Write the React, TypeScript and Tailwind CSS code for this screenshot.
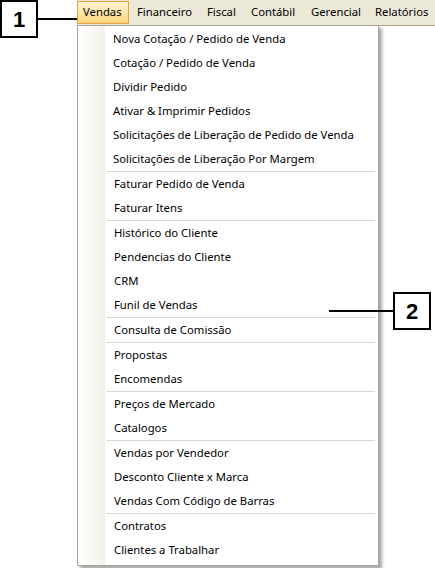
const groups: string[][] = [
  [
    'Nova Cotação / Pedido de Venda',
    'Cotação / Pedido de Venda',
    'Dividir Pedido',
    'Ativar & Imprimir Pedidos',
    'Solicitações de Liberação de Pedido de Venda',
    'Solicitações de Liberação Por Margem',
  ],
  ['Faturar Pedido de Venda', 'Faturar Itens'],
  ['Histórico do Cliente', 'Pendencias do Cliente', 'CRM', 'Funil de Vendas'],
  ['Consulta de Comissão'],
  ['Propostas', 'Encomendas'],
  ['Preços de Mercado', 'Catalogos'],
  ['Vendas por Vendedor', 'Desconto Cliente x Marca', 'Vendas Com Código de Barras'],
  ['Contratos', 'Clientes a Trabalhar'],
];

const topMenu = [
  { label: 'Financeiro', w: 'w-[70px]' },
  { label: 'Fiscal', w: 'w-[44px]' },
  { label: 'Contábil', w: 'w-[60px]' },
  { label: 'Gerencial', w: 'w-[64px]' },
  { label: 'Relatórios', w: 'w-[67px]' },
];

function Callout({ n }: { n: string }) {
  return (
    <div className="w-[38px] h-[38px] border-2 border-black bg-white flex items-center justify-center text-[22px] font-bold text-black font-['Liberation_Sans',sans-serif]">
      {n}
    </div>
  );
}

export default function App() {
  return (
    <div className="w-[435px] h-[568px] bg-white relative overflow-hidden font-['Noto_Sans',sans-serif] text-[11.3px] text-black">
      {/* callout 1 */}
      <div className="absolute left-0 top-0 flex items-center">
        <Callout n="1" />
        <div className="w-[40px] h-[2px] bg-black" />
      </div>

      <div className="ml-[77px] relative">
        {/* menu bar */}
        <div className="h-[26px] bg-[#ece9d8] border-b border-[#b8a58a] flex items-center">
          <div className="w-[52px] h-[23px] pl-[5px] flex items-center border border-[#e5a040] bg-gradient-to-b from-[#fff5d2] to-[#fcd679]">
            Vendas
          </div>
          {topMenu.map((m) => (
            <div key={m.label} className={`${m.w} shrink-0 pl-[8px] whitespace-nowrap`}>
              {m.label}
            </div>
          ))}
        </div>

        {/* dropdown */}
        <div className="absolute left-0 top-[25px] w-[302px] bg-white border border-[#a9a59a] shadow-[3px_3px_3px_rgba(0,0,0,0.35)] flex">
          <div className="w-[27px] shrink-0 bg-gradient-to-r from-white to-[#f3f1e8]" />
          <div className="flex-1 min-w-0 pt-[1px] pb-[3px]">
            {groups.map((g, gi) => (
              <div key={gi} className={gi > 0 ? 'border-t border-[#dcd8cb] ml-[1px] mr-[3px]' : ''}>
                {g.map((item) => (
                  <div key={item} className="h-[24px] flex items-center pl-[8px] whitespace-nowrap">
                    {item}
                  </div>
                ))}
              </div>
            ))}
          </div>
        </div>
      </div>

      {/* callout 2 */}
      <div className="absolute left-[329px] top-[292px] flex items-center">
        <div className="w-[64px] h-[2px] bg-black" />
        <Callout n="2" />
      </div>
    </div>
  );
}
